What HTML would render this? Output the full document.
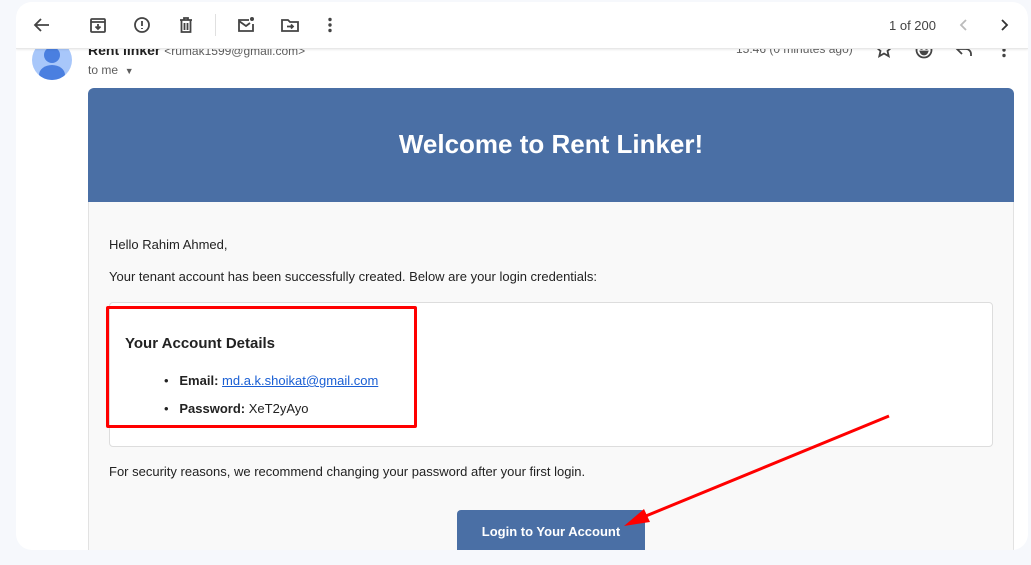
<!DOCTYPE html>
<html><head><meta charset="utf-8"><style>
*{margin:0;padding:0;box-sizing:border-box}
body{width:1031px;height:565px;background:#f6f8fc;font-family:"Liberation Sans",Arial,sans-serif;position:relative;overflow:hidden;color:#222}
.card{position:absolute;left:16px;top:2px;width:1012px;height:548px;background:#fff;border-radius:16px;overflow:hidden}
.abs{position:absolute}
.tb{position:absolute;left:0;top:0;width:1012px;height:47px;background:#fff;border-bottom:1px solid #e8e8e8;box-shadow:0 1px 2px rgba(0,0,0,.08);z-index:5}
svg.i{position:absolute;width:20px;height:20px;fill:none;stroke:#444;stroke-width:1.8}
</style></head><body>
<div class="card">
  <div class="abs" style="left:16px;top:38px;width:40px;height:40px;border-radius:50%;background:#a8c7fa;overflow:hidden">
    <div class="abs" style="left:12px;top:7px;width:16px;height:16px;border-radius:50%;background:#4a7fe0"></div>
    <div class="abs" style="left:7px;top:25px;width:26px;height:20px;border-radius:50%;background:#4a7fe0"></div>
  </div>
  <div class="abs" style="left:72px;top:40px;font-size:14px;font-weight:bold;color:#1f1f1f">Rent linker <span style="font-weight:normal;font-size:12px;color:#5e5e5e">&lt;rumak1599@gmail.com&gt;</span></div>
  <div class="abs" style="left:72px;top:61px;font-size:12px;color:#5e5e5e">to me &nbsp;<span style="font-size:9px">▼</span></div>
  <div class="abs" style="left:720px;top:40px;font-size:12px;color:#5e5e5e">15:46 (0 minutes ago)</div>
  <svg class="i" style="left:858px;top:38px" viewBox="0 0 20 20"><path d="M10 2l2.3 5 5.2.5-4 3.5 1.2 5.2L10 13.5 5.3 16.2 6.5 11l-4-3.5 5.2-.5z"/></svg>
  <svg class="i" style="left:898px;top:38px" viewBox="0 0 20 20"><circle cx="10" cy="10" r="7.5"/><path d="M6.5 11.5h7q-1 3-3.5 3t-3.5-3z" fill="#444"/><circle cx="7.5" cy="8" r=".8" fill="#444"/><circle cx="12.5" cy="8" r=".8" fill="#444"/></svg>
  <svg class="i" style="left:938px;top:38px" viewBox="0 0 20 20"><path d="M8 4L3 9l5 5M3 9h9a5 5 0 0 1 5 5v2"/></svg>
  <svg class="i" style="left:978px;top:38px;fill:#444;stroke:none" viewBox="0 0 20 20"><circle cx="10" cy="4.5" r="1.7"/><circle cx="10" cy="10" r="1.7"/><circle cx="10" cy="15.5" r="1.7"/></svg>

  <div class="tb">
    <svg class="i" style="left:16px;top:13px" viewBox="0 0 20 20"><path d="M17 10H4M9 4l-6 6 6 6"/></svg>
    <svg class="i" style="left:72px;top:13px" viewBox="0 0 20 20"><rect x="3" y="4" width="14" height="13" rx="1"/><path d="M3 7h14M10 9v5M7.5 11.5 10 14l2.5-2.5"/></svg>
    <svg class="i" style="left:116px;top:13px" viewBox="0 0 20 20"><circle cx="10" cy="10" r="7"/><path d="M10 6v5M10 13v1"/></svg>
    <svg class="i" style="left:160px;top:13px" viewBox="0 0 20 20"><path d="M4 5h12M8 5V3h4v2M5.5 5v12h9V5M8.5 8v7M11.5 8v7"/></svg>
    <div class="abs" style="left:199px;top:12px;width:1px;height:22px;background:#e0e0e0"></div>
    <svg class="i" style="left:220px;top:13px" viewBox="0 0 20 20"><path d="M13 5H3v11h14V9"/><path d="M3 6l7 5 4-3"/><circle cx="16" cy="4" r="2" fill="#444" stroke="none"/></svg>
    <svg class="i" style="left:264px;top:13px" viewBox="0 0 20 20"><path d="M2 5h6l2 2h8v9H2z"/><path d="M7 11.5h6M11 9.5l2 2-2 2"/></svg>
    <svg class="i" style="left:304px;top:13px;fill:#444;stroke:none" viewBox="0 0 20 20"><circle cx="10" cy="4.5" r="1.7"/><circle cx="10" cy="10" r="1.7"/><circle cx="10" cy="15.5" r="1.7"/></svg>
    <div class="abs" style="left:873px;top:16px;font-size:13px;color:#444">1 of 200</div>
    <svg class="i" style="left:938px;top:13px;stroke:#bbb" viewBox="0 0 20 20"><path d="M12 5l-5 5 5 5"/></svg>
    <svg class="i" style="left:978px;top:13px;stroke:#333" viewBox="0 0 20 20"><path d="M8 5l5 5-5 5"/></svg>
  </div>

  <div class="abs" style="left:72px;top:86px;width:926px;height:114px;background:#4a6fa5;border-radius:6px 6px 0 0;color:#fff;font-size:26px;font-weight:bold;text-align:center;line-height:112px">Welcome to Rent Linker!</div>
  <div class="abs" style="left:72px;top:200px;width:926px;height:360px;background:#f9f9f9;border:1px solid #e2e2e2;border-top:none"></div>
  <div class="abs" style="left:93px;top:235px;font-size:13px">Hello Rahim Ahmed,</div>
  <div class="abs" style="left:93px;top:267px;font-size:13px">Your tenant account has been successfully created. Below are your login credentials:</div>
  <div class="abs" style="left:93px;top:300px;width:884px;height:145px;background:#fff;border:1px solid #ddd;border-radius:4px"></div>
  <div class="abs" style="left:109px;top:333px;font-size:15px;font-weight:bold;color:#222">Your Account Details</div>
  <div class="abs" style="left:148px;top:371px;font-size:13px">•&nbsp;&nbsp;&nbsp;<b>Email:</b> <span style="color:#1a5fd4;text-decoration:underline">md.a.k.shoikat@gmail.com</span></div>
  <div class="abs" style="left:148px;top:399px;font-size:13px">•&nbsp;&nbsp;&nbsp;<b>Password:</b> XeT2yAyo</div>
  <div class="abs" style="left:93px;top:462px;font-size:13px">For security reasons, we recommend changing your password after your first login.</div>
  <div class="abs" style="left:441px;top:508px;width:188px;height:50px;background:#4a6fa5;border-radius:4px;color:#fff;font-size:13px;font-weight:bold;text-align:center;line-height:44px">Login to Your Account</div>

  <div class="abs" style="left:90px;top:304px;width:311px;height:122px;border:3px solid #f00;border-radius:2px"></div>
  <svg class="abs" style="left:0;top:0" width="1012" height="548"><line x1="873" y1="414" x2="625" y2="516" stroke="#f00" stroke-width="3"/><polygon points="608,524 628,507 634,520" fill="#f00"/></svg>
</div>
</body></html>
